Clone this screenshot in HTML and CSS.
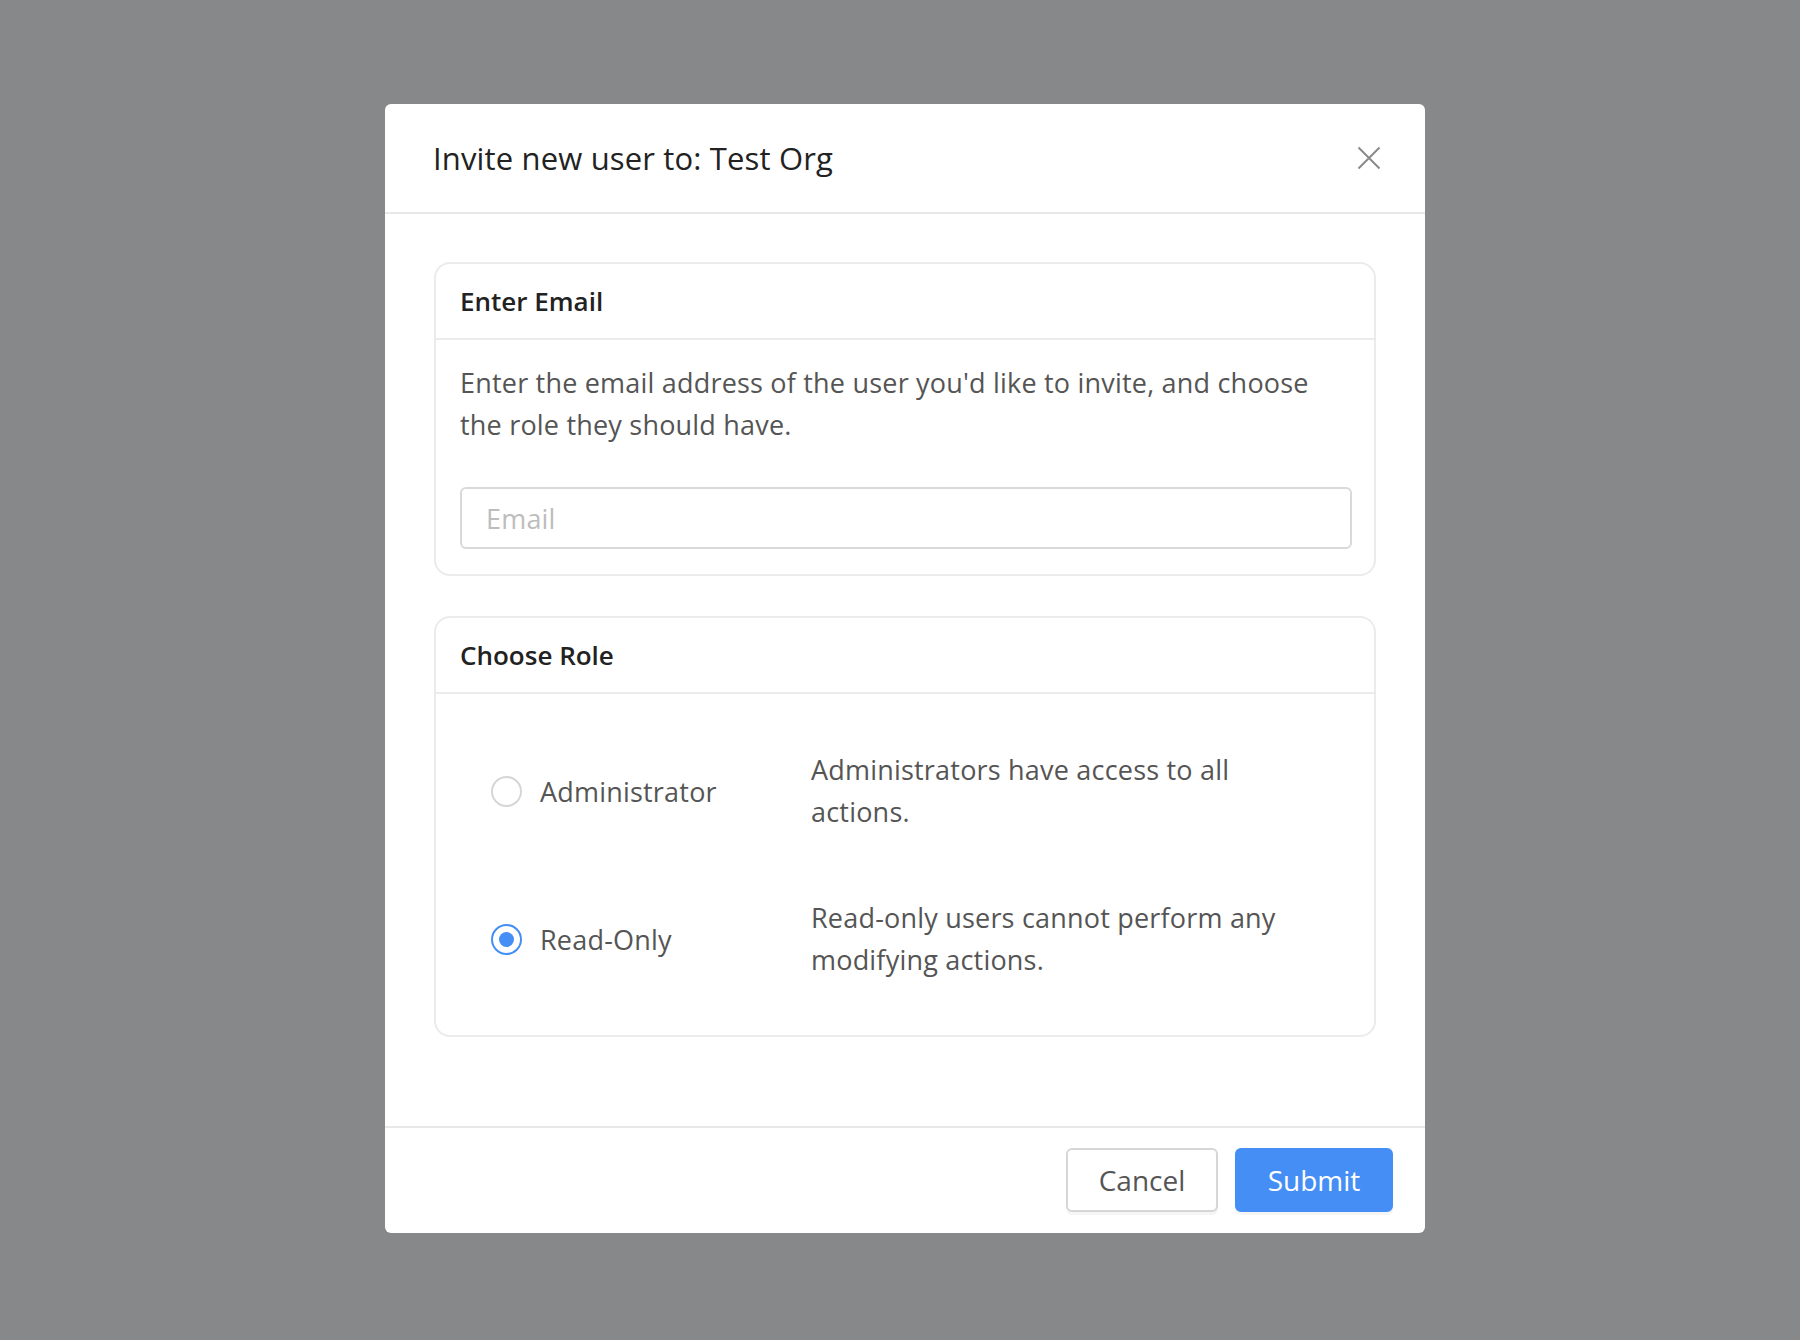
FILE: index.html
```html
<!DOCTYPE html>
<html lang="en">
<head>
<meta charset="utf-8">
<title>Invite new user</title>
<link rel="stylesheet" href="styles.css">
</head>
<body>
<div class="modal">
  <div class="modal-header">
    <h1 class="modal-title">Invite new user to: Test Org</h1>
    <button class="close" aria-label="Close">
      <svg width="24" height="24" viewBox="0 0 24 24"><path d="M1.5 1.5 L22.5 22.5 M22.5 1.5 L1.5 22.5" stroke="#8a8a8a" stroke-width="2" fill="none"/></svg>
    </button>
  </div>
  <div class="modal-body">
    <section class="card">
      <div class="card-header">Enter Email</div>
      <div class="card-body">
        <p class="help">Enter the email address of the user you'd like to invite, and choose the role they should have.</p>
        <input class="input" type="text" placeholder="Email">
      </div>
    </section>
    <section class="card">
      <div class="card-header">Choose Role</div>
      <div class="card-body roles">
        <div class="role">
          <label class="role-label"><span class="radio"></span><span>Administrator</span></label>
          <div class="role-desc">Administrators have access to all actions.</div>
        </div>
        <div class="role">
          <label class="role-label"><span class="radio checked"></span><span>Read-Only</span></label>
          <div class="role-desc">Read-only users cannot perform any modifying actions.</div>
        </div>
      </div>
    </section>
  </div>
  <div class="modal-footer">
    <button class="btn btn-default">Cancel</button>
    <button class="btn btn-primary">Submit</button>
  </div>
</div>
</body>
</html>
```

FILE: styles.css
```css
* { box-sizing: border-box; }
html, body { margin: 0; padding: 0; }
body {
  background: #87888a;
  font-family: "Open Sans", Lato, sans-serif;
  width: 1800px;
  height: 1340px;
  padding: 104px 0 0 385px;
}
.modal {
  width: 1040px;
  background: #fff;
  border-radius: 6px;
  display: flex;
  flex-direction: column;
}
.modal-header {
  display: flex;
  align-items: center;
  justify-content: space-between;
  height: 110px;
  padding: 0 44px 0 48px;
  border-bottom: 2px solid #e8e8e8;
}
.modal-title {
  margin: 0;
  font-size: 31px;
  font-weight: 500;
  letter-spacing: 0.15px;
  color: #222;
  line-height: 36px;
}
.close {
  border: 0;
  background: none;
  padding: 0;
  width: 24px;
  height: 24px;
  display: flex;
}
.modal-body {
  padding: 48px 49px 89px 49px;
  display: flex;
  flex-direction: column;
  gap: 40px;
}
.card {
  border: 2px solid #ebebeb;
  border-radius: 16px;
}
.card-header {
  height: 76px;
  padding: 0 24px;
  display: flex;
  align-items: center;
  font-size: 26px;
  font-weight: 600;
  color: #222;
  border-bottom: 2px solid #ebebeb;
}
.card-body {
  padding: 22px 22px 25px 24px;
}
.help {
  margin: 0 0 41px 0;
  font-size: 27px;
  letter-spacing: 0.2px;
  line-height: 42px;
  color: #555;
}
.input {
  display: block;
  width: 100%;
  height: 62px;
  border: 2px solid #d9d9d9;
  border-radius: 6px;
  padding: 0 24px;
  font-family: inherit;
  font-size: 27px;
  letter-spacing: 0.2px;
  color: #555;
  outline: none;
}
.input::placeholder { color: #bdbdbd; }
.roles {
  padding: 23px 24px 22px 55px;
}
.role {
  display: grid;
  grid-template-columns: 320px 490px;
  align-items: center;
  padding: 32px 0;
}
.role-label {
  display: flex;
  align-items: center;
  gap: 18px;
  font-size: 27px;
  letter-spacing: 0.2px;
  color: #555;
}
.radio {
  width: 31px;
  height: 31px;
  border-radius: 50%;
  border: 2px solid #d6d6d6;
  display: flex;
  align-items: center;
  justify-content: center;
  flex: none;
}
.radio.checked { border-color: #448ef6; }
.radio.checked::after {
  content: "";
  width: 15px;
  height: 15px;
  border-radius: 50%;
  background: #448ef6;
}
.role-desc {
  font-size: 27px;
  letter-spacing: 0.2px;
  line-height: 42px;
  color: #555;
}
.modal-footer {
  border-top: 2px solid #e8e8e8;
  padding: 20px 32px 21px 0;
  display: flex;
  justify-content: flex-end;
  gap: 17px;
}
.btn {
  height: 64px;
  border-radius: 6px;
  font-family: inherit;
  font-size: 28px;
  padding: 0;
  box-shadow: 0 3px 0 rgba(0,0,0,0.04);
}
.btn-default {
  width: 152px;
  background: #fff;
  border: 2px solid #d6d6d6;
  color: #555;
}
.btn-primary {
  width: 158px;
  background: #448ef6;
  border: 2px solid #448ef6;
  color: #fff;
  font-weight: 500;
}
```
